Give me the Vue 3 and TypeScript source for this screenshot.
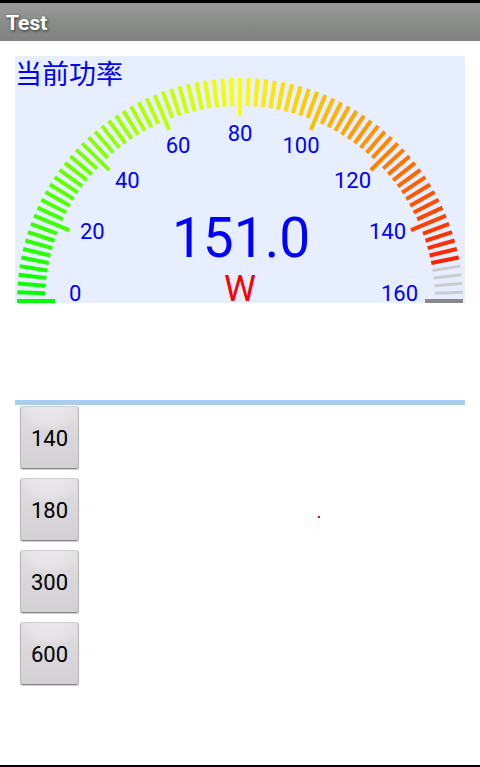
<script setup lang="ts">
import { computed, ref } from 'vue'

interface Tick {
  id: number
  x1: number
  y1: number
  x2: number
  y2: number
  color: string
  width: number
}

interface ScaleLabel {
  text: number
  x: number
  y: number
  anchor: 'start' | 'middle' | 'end'
}

const TICKS = 80
const CENTER_X = 225
const CENTER_Y = 245
const OUTER = 223

const presets: number[] = [140, 180, 300, 600]
const power = ref<number>(151)
const maximum = computed<number>(() => Math.max(160, Math.ceil(power.value / 80) * 80))

function tickColor(ratio: number): string {
  const red = Math.round(Math.min(1, ratio * 2) * 255)
  const green = Math.round(Math.min(1, 2 - ratio * 2) * 255)
  return `rgb(${red}, ${green}, 0)`
}

const ticks = computed<Tick[]>(() =>
  Array.from({ length: TICKS + 1 }, (_, i) => {
    const ratio = i / TICKS
    const angle = Math.PI * (1 - ratio)
    const major = i % 10 === 0
    const inner = major ? 185 : 195
    const active = ratio * maximum.value <= power.value
    return {
      id: i,
      x1: CENTER_X + OUTER * Math.cos(angle),
      y1: CENTER_Y - OUTER * Math.sin(angle),
      x2: CENTER_X + inner * Math.cos(angle),
      y2: CENTER_Y - inner * Math.sin(angle),
      color: active ? tickColor(ratio) : major ? '#888888' : '#cccccc',
      width: active || major ? 4 : 3,
    }
  }),
)

const labelSpots: Omit<ScaleLabel, 'text'>[] = [
  { x: 54, y: 245, anchor: 'start' },
  { x: 65, y: 183, anchor: 'start' },
  { x: 100, y: 132, anchor: 'start' },
  { x: 163, y: 97, anchor: 'middle' },
  { x: 225, y: 85, anchor: 'middle' },
  { x: 286, y: 97, anchor: 'middle' },
  { x: 356, y: 132, anchor: 'end' },
  { x: 391, y: 183, anchor: 'end' },
  { x: 403, y: 245, anchor: 'end' },
]

const labels = computed<ScaleLabel[]>(() =>
  labelSpots.map((spot, i) => ({ ...spot, text: (maximum.value / 8) * i })),
)
</script>

<template>
  <div class="screen">
    <header class="title-bar">
      <h1>Test</h1>
    </header>
    <main class="content">
      <section class="meter">
        <svg class="gauge" viewBox="0 0 450 247">
          <line
            v-for="tick in ticks"
            :key="tick.id"
            :x1="tick.x1"
            :y1="tick.y1"
            :x2="tick.x2"
            :y2="tick.y2"
            :stroke="tick.color"
            :stroke-width="tick.width"
          />
          <text class="caption" x="0" y="28">当前功率</text>
          <text
            v-for="label in labels"
            :key="label.text"
            class="scale"
            :x="label.x"
            :y="label.y"
            :text-anchor="label.anchor"
          >{{ label.text }}</text>
          <text class="reading" x="226" y="201" text-anchor="middle">{{ power.toFixed(1) }}</text>
          <text class="unit" x="225" y="245" text-anchor="middle">W</text>
        </svg>
      </section>
      <section class="controls">
        <span class="marker"></span>
        <button v-for="preset in presets" :key="preset" type="button" @click="power = preset">
          {{ preset }}
        </button>
      </section>
    </main>
  </div>
</template>

<style>
body {
  background: #ffffff;
}
</style>

<style scoped>
.screen {
  display: flex;
  flex-direction: column;
  box-sizing: border-box;
  min-height: 100vh;
  border-top: 3px solid #000000;
  border-bottom: 2px solid #000000;
  background: #ffffff;
  font-family: Roboto, "Noto Sans CJK SC", sans-serif;
}

.title-bar {
  display: flex;
  align-items: center;
  height: 38px;
  padding: 2px 6px 0;
  box-sizing: border-box;
  background: linear-gradient(#9c9a9c, #8f918e 35%, #848684 75%, #848284);
}

h1 {
  margin: 0;
  color: #ffffff;
  font-size: 21px;
  font-weight: 700;
  line-height: 24px;
  text-shadow: 1px 1px 3px #333333;
}

.content {
  padding: 15px 15px 0;
}

.meter {
  padding-bottom: 97px;
  border-bottom: 5px solid #a9cdee;
}

.gauge {
  display: block;
  width: 100%;
  overflow: visible;
  background: #e6eeff;
}

.caption {
  fill: #0000ff;
  font-family: "Noto Sans CJK SC", sans-serif;
  font-size: 27px;
  font-weight: 400;
}

.scale {
  fill: #0000ff;
  font-size: 22px;
}

.reading {
  fill: #0000ff;
  font-size: 55px;
}

.unit {
  fill: #ff0000;
  font-size: 36px;
}

.controls {
  position: relative;
  display: flex;
  flex-direction: column;
  align-items: flex-start;
  gap: 9px;
  padding: 1px 5px;
}

.marker {
  position: absolute;
  top: 111px;
  left: 303px;
  width: 2px;
  height: 2px;
  background: #ff0000;
}

button {
  width: 59px;
  height: 63px;
  padding: 3px 0 0;
  border: 1px solid #b5b5b5;
  border-top-color: #cccccc;
  border-bottom-color: #858585;
  border-radius: 3px;
  background: radial-gradient(ellipse 32px 24px at 50% 0, #ebe9eb, #e6e4e6 60%, transparent),
    linear-gradient(#e0dee0, #d2d0d2);
  box-shadow: 0 1px 1px #cccccc;
  color: #000000;
  font-family: inherit;
  font-size: 22px;
  line-height: 26px;
}
</style>
